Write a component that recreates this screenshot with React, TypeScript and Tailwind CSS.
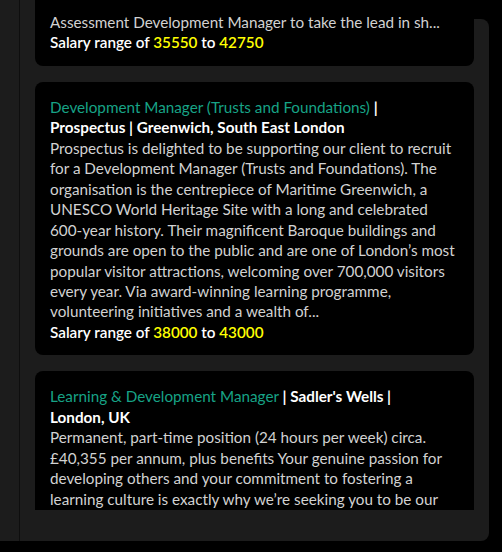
import React from "react";

const font = { fontFamily: "Lato, 'Noto Sans', sans-serif" };

function Salary({ from, to }: { from: string; to: string }) {
  return (
    <div className="font-semibold text-white">
      Salary range of <span className="text-[#ffff00]">{from}</span> to{" "}
      <span className="text-[#ffff00]">{to}</span>
    </div>
  );
}

function Lines({ lines }: { lines: string[] }) {
  return (
    <div className="text-[#d2d2d2]">
      {lines.map((l, i) => (
        <div key={i} className="whitespace-nowrap">
          {l}
        </div>
      ))}
    </div>
  );
}

export default function App() {
  return (
    <div
      className="w-[502px] h-[552px] bg-black text-[15.25px] leading-[20.46px]"
      style={font}
    >
      <div className="flex h-[541px]">
        <div className="w-[20px] bg-[#1c1c1c] border-r border-[#0e0e0e]" />
        <div className="w-[454px] bg-[#1c1c1c] flex flex-col">
          <div className="h-[510px] overflow-hidden pl-[15px] flex flex-col gap-4">
            <div className="bg-black rounded-b-lg px-[15px] pt-[12px] pb-[13px]">
              <Lines
                lines={[
                  "Assessment Development Manager to take the lead in sh...",
                ]}
              />
              <Salary from="35550" to="42750" />
            </div>
            <div className="bg-black rounded-lg px-[15px] pt-[15px] pb-[13px]">
              <div>
                <span className="text-[#17a386]">
                  Development Manager (Trusts and Foundations)
                </span>{" "}
                <span className="font-bold text-white">|</span>
              </div>
              <div className="font-bold text-white">
                Prospectus | Greenwich, South East London
              </div>
              <Lines
                lines={[
                  "Prospectus is delighted to be supporting our client to recruit",
                  "for a Development Manager (Trusts and Foundations). The",
                  "organisation is the centrepiece of Maritime Greenwich, a",
                  "UNESCO World Heritage Site with a long and celebrated",
                  "600-year history. Their magnificent Baroque buildings and",
                  "grounds are open to the public and are one of London\u2019s most",
                  "popular visitor attractions, welcoming over 700,000 visitors",
                  "every year. Via award-winning learning programme,",
                  "volunteering initiatives and a wealth of...",
                ]}
              />
              <Salary from="38000" to="43000" />
            </div>
            <div className="bg-black rounded-lg px-[15px] pt-[15px] pb-[40px] shrink-0">
              <div>
                <span className="text-[#17a386]">
                  Learning &amp; Development Manager
                </span>{" "}
                <span className="font-bold text-white">| Sadler's Wells |</span>
              </div>
              <div className="font-bold text-white">London, UK</div>
              <Lines
                lines={[
                  "Permanent, part-time position (24 hours per week) circa.",
                  "\u00a340,355 per annum, plus benefits Your genuine passion for",
                  "developing others and your commitment to fostering a",
                  "learning culture is exactly why we\u2019re seeking you to be our",
                ]}
              />
            </div>
          </div>
        </div>
        <div className="w-[15px] mt-[19px] bg-[#1c1c1c] rounded-r-lg" />
      </div>
    </div>
  );
}
